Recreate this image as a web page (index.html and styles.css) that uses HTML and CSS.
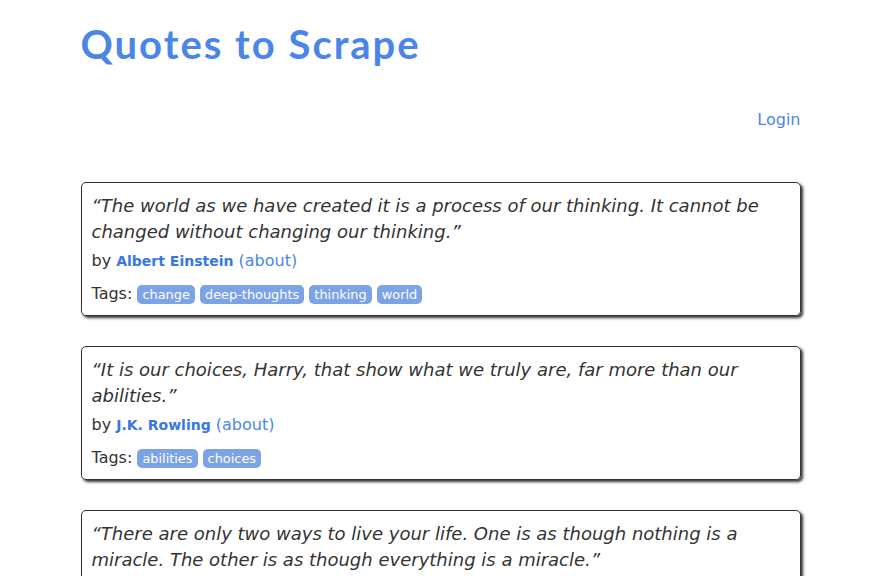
FILE: index.html
```html
<!DOCTYPE html>
<html>
<head>
<meta charset="utf-8">
<title>Quotes to Scrape</title>
<link rel="stylesheet" href="styles.css">
</head>
<body>
<div class="container">
  <header class="header-box">
    <h1 class="site-title"><a href="#">Quotes to Scrape</a></h1>
    <p class="login"><a href="#">Login</a></p>
  </header>
  <main class="quotes">
    <div class="quote">
      <span class="text">“The world as we have created it is a process of our thinking. It cannot be changed without changing our thinking.”</span>
      <span class="by">by <small class="author">Albert Einstein</small> <a class="about" href="#">(about)</a></span>
      <div class="tags">Tags: <a class="tag" href="#">change</a> <a class="tag" href="#">deep-thoughts</a> <a class="tag" href="#">thinking</a> <a class="tag" href="#">world</a></div>
    </div>
    <div class="quote">
      <span class="text">“It is our choices, Harry, that show what we truly are, far more than our abilities.”</span>
      <span class="by">by <small class="author">J.K. Rowling</small> <a class="about" href="#">(about)</a></span>
      <div class="tags">Tags: <a class="tag" href="#">abilities</a> <a class="tag" href="#">choices</a></div>
    </div>
    <div class="quote">
      <span class="text">“There are only two ways to live your life. One is as though nothing is a miracle. The other is as though everything is a miracle.”</span>
      <span class="by">by <small class="author">Albert Einstein</small> <a class="about" href="#">(about)</a></span>
      <div class="tags">Tags: <a class="tag" href="#">inspirational</a> <a class="tag" href="#">life</a> <a class="tag" href="#">live</a> <a class="tag" href="#">miracle</a> <a class="tag" href="#">miracles</a></div>
    </div>
  </main>
</div>
</body>
</html>
```
FILE: styles.css
```css
* { box-sizing: border-box; }
html, body { margin: 0; padding: 0; }
body {
  font-family: "DejaVu Sans", sans-serif;
  font-size: 16px;
  line-height: 1.42857;
  color: #333333;
  background: #ffffff;
}
a { text-decoration: none; color: #4a86e8; }
.container {
  width: 750px;
  margin: 0 auto;
  padding: 0 15px;
}
.header-box {
  display: flex;
  flex-direction: column;
  padding-top: 20px;
}
.site-title {
  margin: 0;
  font-family: "Lato", sans-serif;
  font-weight: 700;
  font-size: 40px;
  line-height: 49px;
  letter-spacing: 2px;
}
.site-title a { color: #4a86e8; }
.login {
  align-self: flex-end;
  margin: 39px 0 0 0;
  line-height: 23px;
}
.quotes {
  margin-top: 51px;
}
.quote {
  padding: 10px 10px 9px 10px;
  margin-bottom: 30px;
  border: 1px solid #333333;
  border-radius: 5px;
  box-shadow: 2px 2px 3px #333333;
}
.quote .text {
  display: block;
  font-size: 18px;
  font-style: italic;
  line-height: 26px;
  margin-bottom: 4px;
}
.quote .by {
  display: block;
  line-height: 23px;
  margin-bottom: 9px;
}
.author {
  font-size: 14px;
  font-weight: bold;
  color: #3677e8;
}
.tags { line-height: 23px; }
.tag {
  padding: 2px 5px;
  border-radius: 5px;
  color: #ffffff;
  font-size: 12.9px;
  background-color: #7ca3e6;
}
```
